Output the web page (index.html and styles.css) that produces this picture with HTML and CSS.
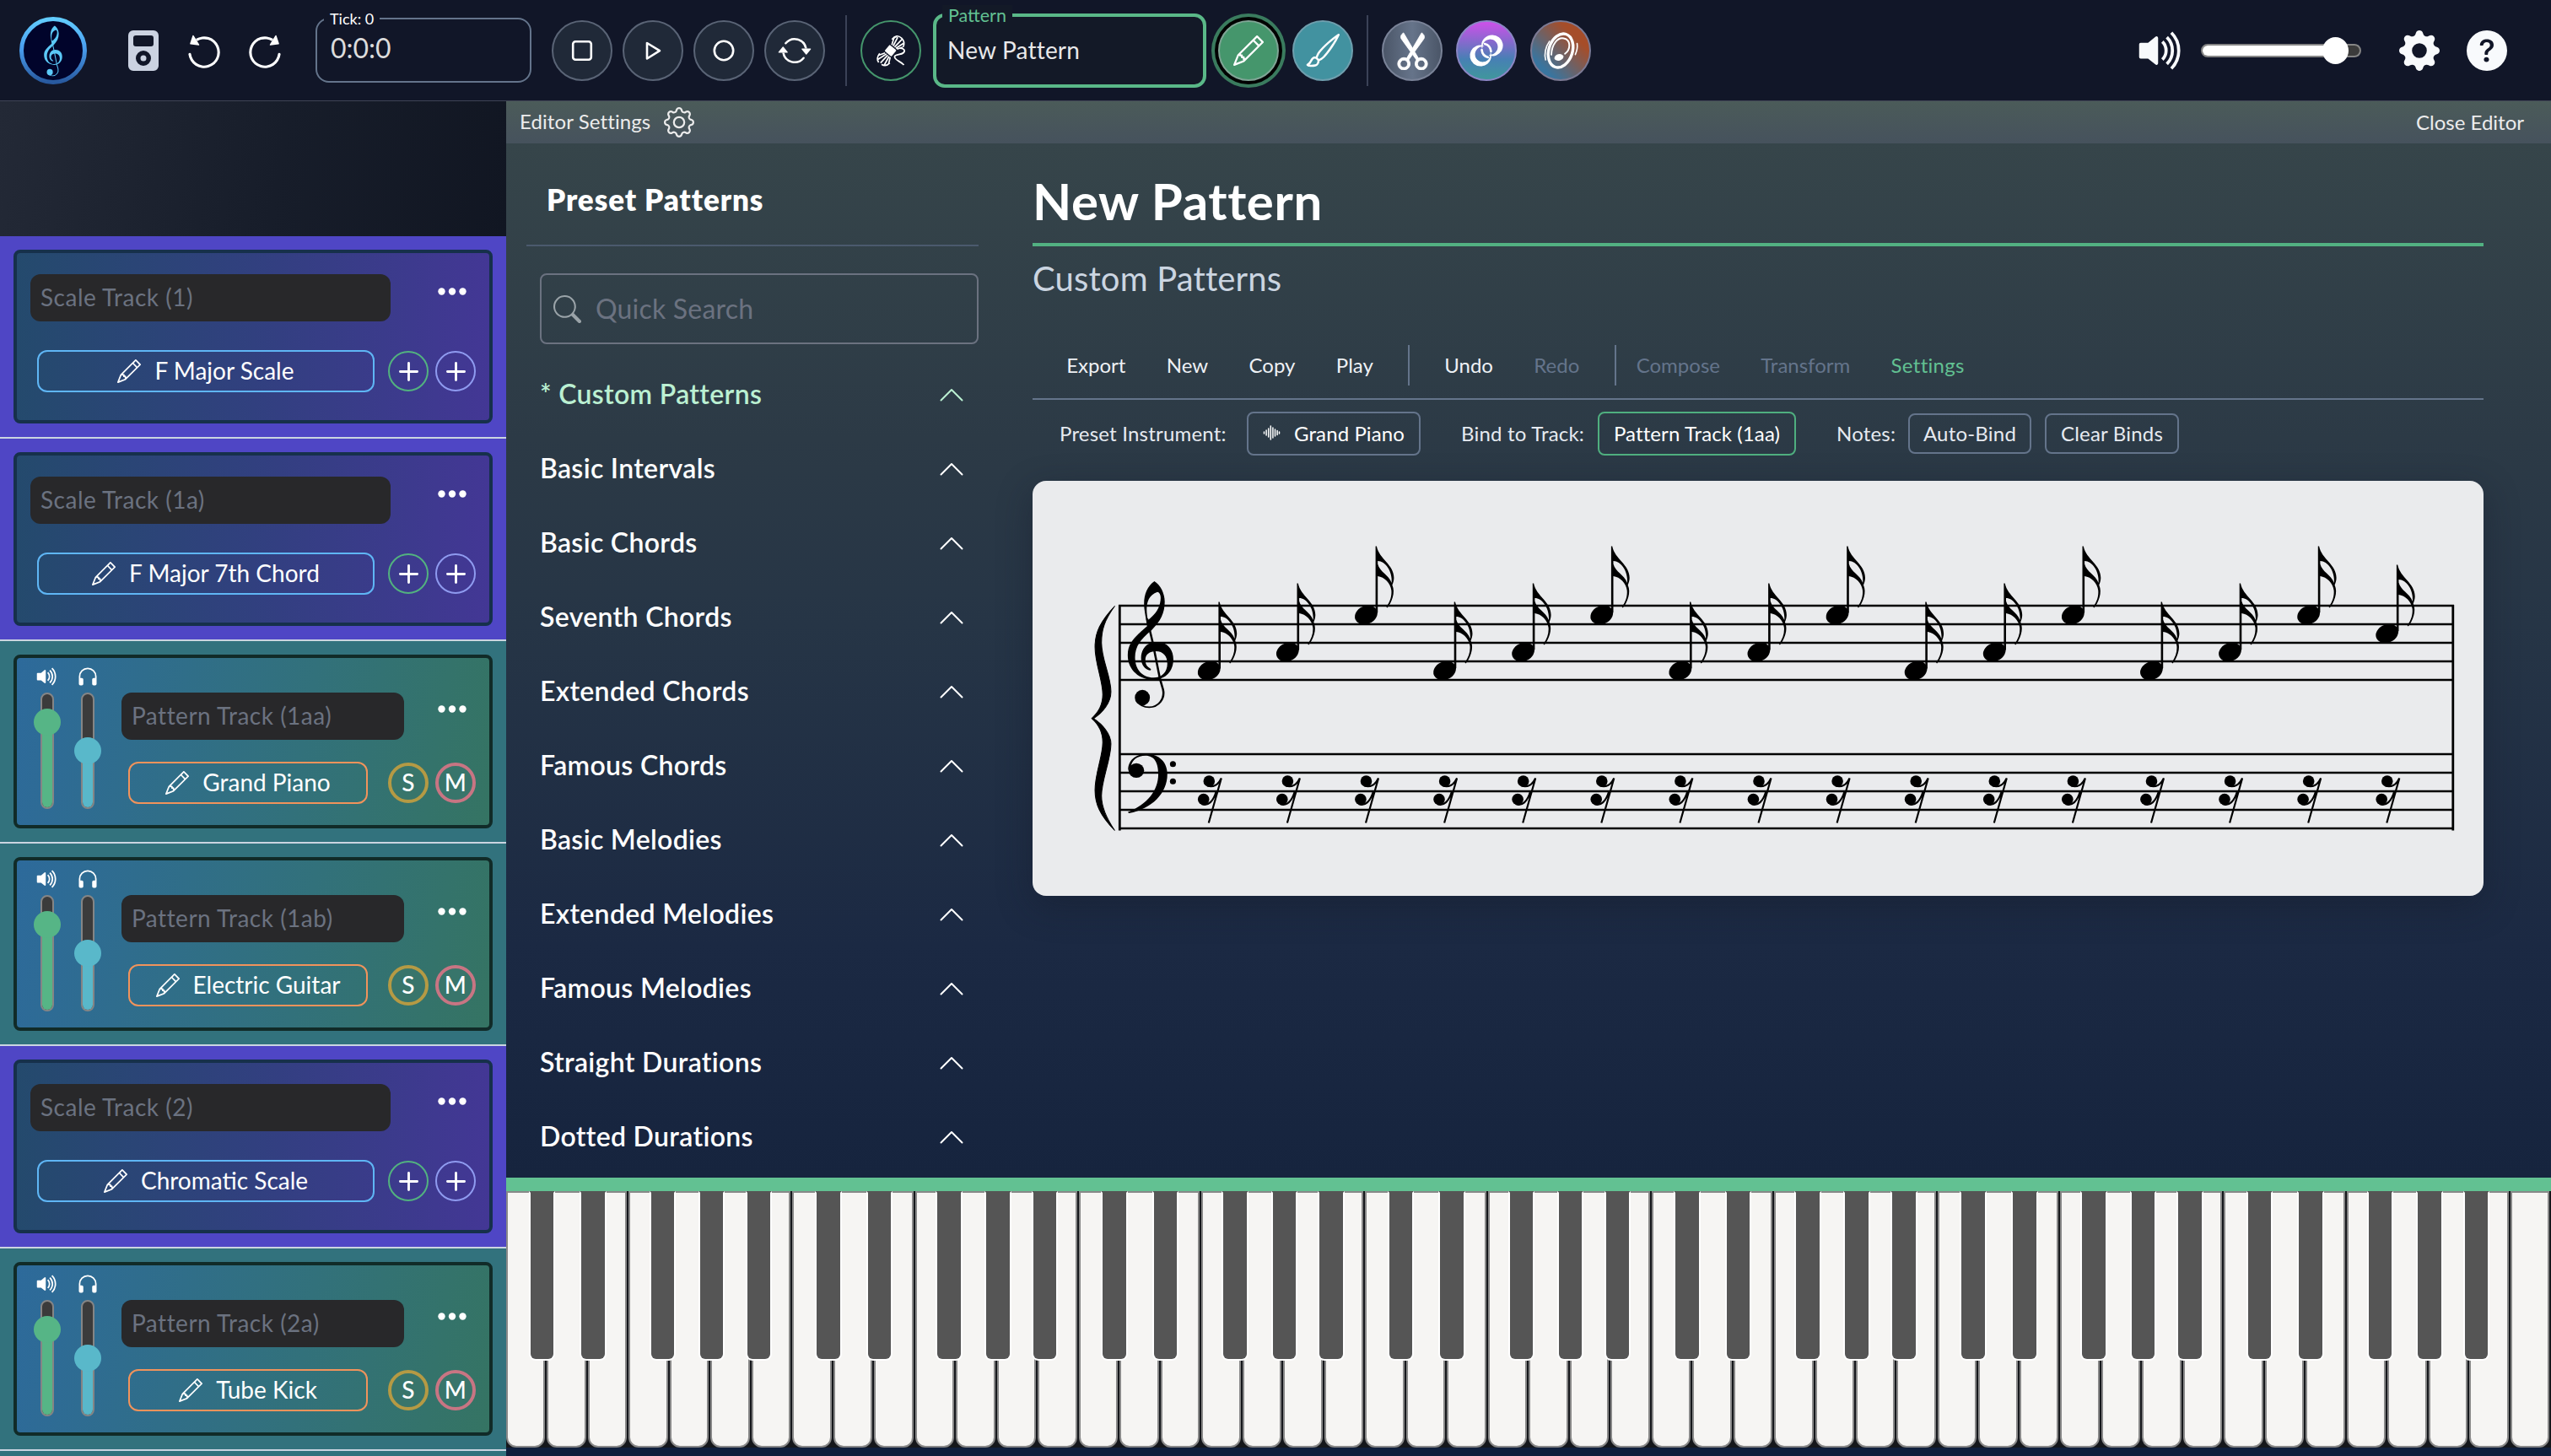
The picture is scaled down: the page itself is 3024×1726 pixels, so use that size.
FILE: index.html
```html
<!DOCTYPE html>
<html lang="en">
<head>
<meta charset="utf-8">
<title>New Pattern</title>
<link rel="stylesheet" href="styles.css">
</head>
<body>
<svg class="defs" aria-hidden="true">
  <defs>
    <linearGradient id="logoRing" x1="0" y1="0" x2="0" y2="1"><stop offset="0" stop-color="#62ccff"/><stop offset=".45" stop-color="#4a9ff0"/><stop offset="1" stop-color="#28599f"/></linearGradient>
    <symbol id="pencil" viewBox="0 0 16 16"><path d="M12.146.146a.5.5 0 0 1 .708 0l3 3a.5.5 0 0 1 0 .708l-10 10a.5.5 0 0 1-.168.11l-5 2a.5.5 0 0 1-.65-.65l2-5a.5.5 0 0 1 .11-.168zM11.207 2.5 13.5 4.793 14.793 3.5 12.5 1.207zm1.586 3L10.5 3.207 4 9.707V10h.5a.5.5 0 0 1 .5.5v.5h.5a.5.5 0 0 1 .5.5v.5h.293zm-9.761 5.175-.106.106-1.528 3.821 3.821-1.528.106-.106A.5.5 0 0 1 5 12.5V12h-.5a.5.5 0 0 1-.5-.5V11h-.5a.5.5 0 0 1-.468-.325"/></symbol>
    <symbol id="brush" viewBox="0 0 16 16"><path d="M15.825.12a.5.5 0 0 1 .132.584c-1.53 3.43-4.743 8.17-7.095 10.64a6.1 6.1 0 0 1-2.373 1.534c-.018.227-.06.538-.16.868-.201.659-.667 1.479-1.708 1.74a8.1 8.1 0 0 1-3.078.132 4 4 0 0 1-.562-.135 1.4 1.4 0 0 1-.466-.247.7.7 0 0 1-.204-.288.62.62 0 0 1 .004-.443c.095-.245.316-.38.461-.452.394-.197.625-.453.867-.826.095-.144.184-.297.287-.472l.117-.198c.151-.255.326-.54.546-.848.528-.739 1.201-.925 1.746-.896q.19.012.348.048c.062-.172.142-.38.238-.608.261-.619.658-1.419 1.187-2.069 2.176-2.67 6.18-6.206 9.117-8.104a.5.5 0 0 1 .596.04M4.705 11.912a1.2 1.2 0 0 0-.419-.1c-.246-.013-.573.05-.879.479-.197.275-.355.532-.5.777l-.105.177c-.106.181-.213.362-.32.528a3.4 3.4 0 0 1-.76.861c.69.112 1.736.111 2.657-.12.559-.139.843-.569.993-1.06a3 3 0 0 0 .126-.75zm1.44.026c.12-.04.277-.1.458-.183a5.1 5.1 0 0 0 1.535-1.1c1.9-1.996 4.412-5.57 6.052-8.631-2.59 1.927-5.566 4.66-7.302 6.792-.442.543-.795 1.243-1.042 1.826-.121.288-.214.54-.275.72v.001l.575.575z"/></symbol>
    <symbol id="scissors" viewBox="0 0 16 16"><path stroke="currentColor" stroke-width=".3" d="M3.5 3.5c-.614-.884-.074-1.962.858-2.5L8 7.226 11.642 1c.932.538 1.472 1.616.858 2.5L8.81 8.61l1.556 2.661a2.5 2.5 0 1 1-.794.637L8 9.73l-1.572 2.177a2.5 2.5 0 1 1-.794-.637L7.19 8.61zm2.5 10a1.5 1.5 0 1 0-3 0 1.5 1.5 0 0 0 3 0m7 0a1.5 1.5 0 1 0-3 0 1.5 1.5 0 0 0 3 0"/></symbol>
    <symbol id="gear" viewBox="0 0 16 16"><path d="M8 4.754a3.246 3.246 0 1 0 0 6.492 3.246 3.246 0 0 0 0-6.492M5.754 8a2.246 2.246 0 1 1 4.492 0 2.246 2.246 0 0 1-4.492 0"/><path d="M9.796 1.343c-.527-1.79-3.065-1.79-3.592 0l-.094.319a.873.873 0 0 1-1.255.52l-.292-.16c-1.64-.892-3.433.902-2.54 2.541l.159.292a.873.873 0 0 1-.52 1.255l-.319.094c-1.79.527-1.79 3.065 0 3.592l.319.094a.873.873 0 0 1 .52 1.255l-.16.292c-.892 1.64.901 3.434 2.541 2.54l.292-.159a.873.873 0 0 1 1.255.52l.094.319c.527 1.79 3.065 1.79 3.592 0l.094-.319a.873.873 0 0 1 1.255-.52l.292.16c1.64.893 3.434-.902 2.54-2.541l-.159-.292a.873.873 0 0 1 .52-1.255l.319-.094c1.79-.527 1.79-3.065 0-3.592l-.319-.094a.873.873 0 0 1-.52-1.255l.16-.292c.893-1.64-.902-3.433-2.541-2.54l-.292.159a.873.873 0 0 1-1.255-.52zm-2.633.283c.246-.835 1.428-.835 1.674 0l.094.319a1.873 1.873 0 0 0 2.693 1.115l.291-.16c.764-.415 1.6.42 1.184 1.185l-.159.292a1.873 1.873 0 0 0 1.116 2.692l.318.094c.835.246.835 1.428 0 1.674l-.319.094a1.873 1.873 0 0 0-1.115 2.693l.16.291c.415.764-.42 1.6-1.185 1.184l-.291-.159a1.873 1.873 0 0 0-2.693 1.116l-.094.318c-.246.835-1.428.835-1.674 0l-.094-.319a1.873 1.873 0 0 0-2.692-1.115l-.292.16c-.764.415-1.6-.42-1.184-1.185l.159-.291A1.873 1.873 0 0 0 1.945 8.93l-.319-.094c-.835-.246-.835-1.428 0-1.674l.319-.094A1.873 1.873 0 0 0 3.06 4.377l-.16-.292c-.415-.764.42-1.6 1.185-1.184l.292.159a1.873 1.873 0 0 0 2.692-1.115z"/></symbol>
    <symbol id="gear-fill" viewBox="0 0 16 16"><path d="M9.405 1.05c-.413-1.4-2.397-1.4-2.81 0l-.1.34a1.464 1.464 0 0 1-2.105.872l-.31-.17c-1.283-.698-2.686.705-1.987 1.987l.169.311c.446.82.023 1.841-.872 2.105l-.34.1c-1.4.413-1.4 2.397 0 2.81l.34.1a1.464 1.464 0 0 1 .872 2.105l-.17.31c-.698 1.283.705 2.686 1.987 1.987l.311-.169a1.464 1.464 0 0 1 2.105.872l.1.34c.413 1.4 2.397 1.4 2.81 0l.1-.34a1.464 1.464 0 0 1 2.105-.872l.31.17c1.283.698 2.686-.705 1.987-1.987l-.169-.311a1.464 1.464 0 0 1 .872-2.105l.34-.1c1.4-.413 1.4-2.397 0-2.81l-.34-.1a1.464 1.464 0 0 1-.872-2.105l.17-.31c.698-1.283-.705-2.686-1.987-1.987l-.311.169a1.464 1.464 0 0 1-2.105-.872zM8 10.93a2.929 2.929 0 1 1 0-5.86 2.929 2.929 0 0 1 0 5.858z"/></symbol>
    <symbol id="question" viewBox="0 0 16 16"><path d="M16 8A8 8 0 1 1 0 8a8 8 0 0 1 16 0M5.496 6.033h.825c.138 0 .248-.113.266-.25.09-.656.54-1.134 1.342-1.134.686 0 1.314.343 1.314 1.168 0 .635-.374.927-.965 1.371-.673.489-1.206 1.06-1.168 1.987l.003.217a.25.25 0 0 0 .25.246h.811a.25.25 0 0 0 .25-.25v-.105c0-.718.273-.927 1.01-1.486.609-.463 1.244-.977 1.244-2.056 0-1.511-1.276-2.241-2.673-2.241-1.267 0-2.655.59-2.75 2.286a.237.237 0 0 0 .241.247m2.325 6.443c.61 0 1.029-.394 1.029-.927 0-.552-.42-.94-1.029-.94-.584 0-1.009.388-1.009.94 0 .533.425.927 1.01.927z"/></symbol>
    <symbol id="volume" viewBox="0 0 16 16"><path d="M11.536 14.01A8.47 8.47 0 0 0 14.026 8a8.47 8.47 0 0 0-2.49-6.01l-.708.707A7.48 7.48 0 0 1 13.025 8c0 2.071-.84 3.946-2.197 5.303z"/><path d="M10.121 12.596A6.48 6.48 0 0 0 12.025 8a6.48 6.48 0 0 0-1.904-4.596l-.707.707A5.48 5.48 0 0 1 11.025 8a5.48 5.48 0 0 1-1.61 3.89z"/><path d="M8.707 11.182A4.5 4.5 0 0 0 10.025 8a4.5 4.5 0 0 0-1.318-3.182L8 5.525A3.5 3.5 0 0 1 9.025 8 3.5 3.5 0 0 1 8 10.475zM6.717 3.55A.5.5 0 0 1 7 4v8a.5.5 0 0 1-.812.39L3.825 10.5H1.5A.5.5 0 0 1 1 10V6a.5.5 0 0 1 .5-.5h2.325l2.363-1.89a.5.5 0 0 1 .529-.06"/></symbol>
    <symbol id="headphones" viewBox="0 0 16 16"><path d="M8 3a5 5 0 0 0-5 5v1h1a1 1 0 0 1 1 1v3a1 1 0 0 1-1 1H3a1 1 0 0 1-1-1V8a6 6 0 1 1 12 0v5a1 1 0 0 1-1 1h-1a1 1 0 0 1-1-1v-3a1 1 0 0 1 1-1h1V8a5 5 0 0 0-5-5"/></symbol>
    <symbol id="rewind" viewBox="0 0 16 16"><g transform="rotate(-32 8 8)"><path d="M8 3a5 5 0 1 1-4.546 2.914.5.5 0 0 0-.908-.417A6 6 0 1 0 8 2z"/><path d="M8 4.466V.534a.25.25 0 0 0-.41-.192L5.23 2.308a.25.25 0 0 0 0 .384l2.36 1.966A.25.25 0 0 0 8 4.466"/></g></symbol>
    <symbol id="repeat" viewBox="0 0 16 16"><path d="M11.534 7h3.932a.25.25 0 0 1 .192.41l-1.966 2.36a.25.25 0 0 1-.384 0l-1.966-2.36a.25.25 0 0 1 .192-.41m-11 2h3.932a.25.25 0 0 0 .192-.41L2.692 6.23a.25.25 0 0 0-.384 0L.342 8.59A.25.25 0 0 0 .534 9"/><path d="M8 3c-1.552 0-2.94.707-3.857 1.818a.5.5 0 1 1-.771-.636A6.002 6.002 0 0 1 13.917 7H12.9A5 5 0 0 0 8 3M3.1 9a5.002 5.002 0 0 0 8.757 2.182.5.5 0 1 1 .771.636A6.002 6.002 0 0 1 2.083 9z"/></symbol>
    <symbol id="search" viewBox="0 0 16 16"><path d="M11.742 10.344a6.5 6.5 0 1 0-1.397 1.398h-.001q.044.06.098.115l3.85 3.85a1 1 0 0 0 1.415-1.414l-3.85-3.85a1 1 0 0 0-.115-.1zM12 6.5a5.5 5.5 0 1 1-11 0 5.5 5.5 0 0 1 11 0"/></symbol>
    <symbol id="chevron" viewBox="0 0 28 16"><path d="M1.5 14.5 14 2 26.500 14.500" fill="none" stroke="currentColor" stroke-width="2" stroke-linecap="round" stroke-linejoin="round"/></symbol>
    <symbol id="dots" viewBox="0 0 34 9"><circle cx="4.500" cy="4.500" r="4.200"/><circle cx="17" cy="4.500" r="4.200"/><circle cx="29.500" cy="4.500" r="4.200"/></symbol>
    <symbol id="plus" viewBox="0 0 24 24"><path d="M12 1.500v21M1.500 12h21" stroke="currentColor" stroke-width="3" stroke-linecap="round"/></symbol>
    <symbol id="gclef" viewBox="1335 688 58 153"><g transform="translate(1220 560) scale(.5102 .33333)">
      <path fill-rule="evenodd" d="M291 387C270 410 263 450 269 500L274 547C242 590 229 610 229 650C229 705 258 737 288 737C318 737 335 705 335 665C335 625 318 603 296 603C272 603 260 630 260 660C260 685 270 702 281 704C284 703 284 700 280 696C272 688 270 680 270 665C270 648 280 636 294 636C312 636 321 655 321 680C321 710 308 730 289 730C262 730 246 700 246 658C246 615 262 590 285 560C305 530 315 500 315 460C315 430 305 400 291 387ZM298 425C306 428 307 445 304 465C300 492 290 508 276 525C271 490 269 440 298 425Z"/>
      <path d="M274 520L287 605L304 735L311 772C316 806 300 835 279 835C268 835 258 830 254 815" fill="none" stroke="currentColor" stroke-width="5"/><ellipse cx="263" cy="801" rx="17.500" ry="28"/></g></symbol>
  </defs>
</svg>

<header class="topbar">
  <svg class="logo" viewBox="0 0 80 80"><circle cx="40" cy="40" r="37.500" fill="#01042b" stroke="url(#logoRing)" stroke-width="5"/><use href="#gclef" x="28" y="10" width="24" height="61"/></svg>
  <svg class="player" viewBox="0 0 36 48"><path fill-rule="evenodd" d="M6 0h24a6 6 0 0 1 6 6v36a6 6 0 0 1-6 6H6a6 6 0 0 1-6-6V6a6 6 0 0 1 6-6M9 6a3 3 0 0 0-3 3v7a3 3 0 0 0 3 3h18a3 3 0 0 0 3-3V9a3 3 0 0 0-3-3zM18 24a9 9 0 1 0 0 18 9 9 0 0 0 0-18M18 29.500a3.500 3.500 0 1 1 0 7 3.500 3.500 0 0 1 0-7"/></svg>
  <svg class="undo"><use href="#rewind"/></svg>
  <svg class="redo"><use href="#rewind"/></svg>
  <fieldset class="tick"><legend>Tick: 0</legend>0:0:0</fieldset>
  <div class="transport">
    <button class="round"><svg viewBox="0 0 40 40" class="i40"><rect x="9.200" y="9.200" width="21.600" height="21.600" rx="3" fill="none" stroke="currentColor" stroke-width="2.600"/></svg></button>
    <button class="round"><svg viewBox="0 0 40 40" class="i40"><path d="M13 11v18.500l15-9.300z" fill="none" stroke="currentColor" stroke-width="2.600" stroke-linejoin="round"/></svg></button>
    <button class="round"><svg viewBox="0 0 40 40" class="i40"><circle cx="20" cy="20" r="11.200" fill="none" stroke="currentColor" stroke-width="2.600"/></svg></button>
    <button class="round"><svg class="i40"><use href="#repeat"/></svg></button>
  </div>
  <i class="rule"></i>
  <button class="round yarn"><svg viewBox="0 0 72 72" class="full line">
    <g transform="rotate(-50 36 36)"><rect x="31" y="30.500" width="9.500" height="10.500" rx="1" fill="currentColor" stroke="none"/>
    <path stroke-width="1.700" d="M42 32.500L49 29.500Q52 29 53 31M42 34.600L53.500 32M42 36.700L54.500 37.500M42 38.800L52.500 42M42 40.500L48 44M47 28.500Q56 28 55.500 36.500Q55 43 48.500 44.500M29.500 32.500L22.500 28.500M29.500 34.600L18.500 31M29.500 36.700L17 36M29.500 38.800L18 41M29.500 40.500L22.500 44M25 28Q17 28.500 16 34M16.500 38Q17 44 24 44.500"/></g>
    <path stroke-width="1.800" d="M46.500 33c5 0 7 3 4.500 5.500-3 3-11 1.500-10.500 5 .4 4 7 5 11 9.500"/></svg></button>
  <fieldset class="pattern-name"><legend>Pattern</legend>New Pattern</fieldset>
  <button class="round pen"><svg class="i36"><use href="#pencil"/></svg></button>
  <button class="round paint"><svg class="i40"><use href="#brush"/></svg></button>
  <i class="rule second"></i>
  <button class="round cut"><svg class="i46"><use href="#scissors"/></svg></button>
  <button class="round rings"><svg viewBox="0 0 72 72" class="full"><g fill-rule="evenodd"><path d="M43 17.500a12.500 12.500 0 0 1 5 24c-3 1.500-7 1.200-9.500-.5 4 .2 7.500-1 9.500-4.500a9 9 0 1 0-16.500-5.500c0 1-.1 2-.6 3-3-8 3-16.500 12.100-16.500"/><path d="M29 54.500a12.500 12.500 0 0 1-5-24c3-1.500 7-1.200 9.500.5-4-.2-7.500 1-9.500 4.500a9 9 0 1 0 16.500 5.500c0-1 .1-2 .6-3 3 8-3 16.500-12.100 16.500"/></g><path d="M34 28c4 1 7 4 7.500 9M38 44c-4-1-7-4-7.500-9" fill="none" stroke="currentColor" stroke-width="2.600" stroke-linecap="round"/></svg></button>
  <button class="round ear"><svg viewBox="0 0 72 72" class="full line" stroke-linecap="round"><g transform="rotate(18 36 36)"><ellipse cx="36" cy="36" rx="14" ry="20.500" stroke-width="3.400"/><path d="M20 29.500C17.500 37 18.500 46 22.500 52M52 22C54 26 54.500 30 54 35" stroke-width="1.600"/><path d="M27 44C24 33 27 22 35 21C44 20 47 31 42 38" stroke-width="2"/></g><ellipse cx="34" cy="44" rx="5.500" ry="3.800" fill="currentColor" stroke="none" transform="rotate(-15 34 44)"/></svg></button>
  <div class="right">
    <svg class="vol"><use href="#volume"/></svg>
    <div class="hslider"><i class="fill"></i><i class="thumb"></i></div>
    <svg class="i48"><use href="#gear-fill"/></svg>
    <svg class="i48 help"><use href="#question"/></svg>
  </div>
</header>

<div class="workspace">
  <aside class="tracks">
    <div class="corner"></div>

    <section class="track scale"><div class="card">
      <div class="row top"><div class="name">Scale Track (1)</div><svg class="more"><use href="#dots"/></svg></div>
      <div class="row"><button class="edit"><svg><use href="#pencil"/></svg>F Major Scale</button><button class="mini g"><svg><use href="#plus"/></svg></button><button class="mini p"><svg><use href="#plus"/></svg></button></div>
    </div></section>

    <section class="track scale"><div class="card">
      <div class="row top"><div class="name">Scale Track (1a)</div><svg class="more"><use href="#dots"/></svg></div>
      <div class="row"><button class="edit"><svg><use href="#pencil"/></svg>F Major 7th Chord</button><button class="mini g"><svg><use href="#plus"/></svg></button><button class="mini p"><svg><use href="#plus"/></svg></button></div>
    </div></section>

    <section class="track patt"><div class="card">
      <div class="fader"><svg><use href="#volume"/></svg><div class="vslider vol-f"><i class="fill"></i><i class="thumb"></i></div></div>
      <div class="fader"><svg><use href="#headphones"/></svg><div class="vslider pan-f"><i class="fill"></i><i class="thumb"></i></div></div>
      <div class="body">
        <div class="row top"><div class="name">Pattern Track (1aa)</div><svg class="more"><use href="#dots"/></svg></div>
        <div class="row"><button class="edit"><svg><use href="#pencil"/></svg>Grand Piano</button><button class="mini s">S</button><button class="mini m">M</button></div>
      </div>
    </div></section>

    <section class="track patt"><div class="card">
      <div class="fader"><svg><use href="#volume"/></svg><div class="vslider vol-f"><i class="fill"></i><i class="thumb"></i></div></div>
      <div class="fader"><svg><use href="#headphones"/></svg><div class="vslider pan-f"><i class="fill"></i><i class="thumb"></i></div></div>
      <div class="body">
        <div class="row top"><div class="name">Pattern Track (1ab)</div><svg class="more"><use href="#dots"/></svg></div>
        <div class="row"><button class="edit"><svg><use href="#pencil"/></svg>Electric Guitar</button><button class="mini s">S</button><button class="mini m">M</button></div>
      </div>
    </div></section>

    <section class="track scale"><div class="card">
      <div class="row top"><div class="name">Scale Track (2)</div><svg class="more"><use href="#dots"/></svg></div>
      <div class="row"><button class="edit"><svg><use href="#pencil"/></svg>Chromatic Scale</button><button class="mini g"><svg><use href="#plus"/></svg></button><button class="mini p"><svg><use href="#plus"/></svg></button></div>
    </div></section>

    <section class="track patt"><div class="card">
      <div class="fader"><svg><use href="#volume"/></svg><div class="vslider vol-f"><i class="fill"></i><i class="thumb"></i></div></div>
      <div class="fader"><svg><use href="#headphones"/></svg><div class="vslider pan-f"><i class="fill"></i><i class="thumb"></i></div></div>
      <div class="body">
        <div class="row top"><div class="name">Pattern Track (2a)</div><svg class="more"><use href="#dots"/></svg></div>
        <div class="row"><button class="edit"><svg><use href="#pencil"/></svg>Tube Kick</button><button class="mini s">S</button><button class="mini m">M</button></div>
      </div>
    </div></section>
    <section class="track patt"></section>
  </aside>

  <main class="stage">
    <div class="editor">
      <div class="editor-bar"><span>Editor Settings</span><svg><use href="#gear"/></svg><span class="close">Close Editor</span></div>
      <div class="editor-body">
        <nav class="presets">
          <h2>Preset Patterns</h2>
          <div class="list">
            <div class="search"><svg><use href="#search"/></svg><span>Quick Search</span></div>
            <div class="item on">* Custom Patterns<svg><use href="#chevron"/></svg></div>
            <div class="item">Basic Intervals<svg><use href="#chevron"/></svg></div>
            <div class="item">Basic Chords<svg><use href="#chevron"/></svg></div>
            <div class="item">Seventh Chords<svg><use href="#chevron"/></svg></div>
            <div class="item">Extended Chords<svg><use href="#chevron"/></svg></div>
            <div class="item">Famous Chords<svg><use href="#chevron"/></svg></div>
            <div class="item">Basic Melodies<svg><use href="#chevron"/></svg></div>
            <div class="item">Extended Melodies<svg><use href="#chevron"/></svg></div>
            <div class="item">Famous Melodies<svg><use href="#chevron"/></svg></div>
            <div class="item">Straight Durations<svg><use href="#chevron"/></svg></div>
            <div class="item">Dotted Durations<svg><use href="#chevron"/></svg></div>
          </div>
        </nav>
        <section class="content">
          <h1>New Pattern</h1>
          <p class="sub">Custom Patterns</p>
          <div class="menu"><span>Export</span><span>New</span><span>Copy</span><span>Play</span><i></i><span>Undo</span><span class="off">Redo</span><i class="tight"></i><span class="off">Compose</span><span class="off">Transform</span><span class="active">Settings</span></div>
          <div class="settings">
            <label class="l1">Preset Instrument:</label><button class="b1"><svg viewBox="0 0 20 20"><path d="M1 9v2M3.600 7v6M6.200 5v10M8.800 2v16M11.400 4v12M14 6v8M16.600 7.500v5M19 9v2" stroke="currentColor" stroke-width="1.500" stroke-linecap="round"/></svg>Grand Piano</button>
            <label class="l2">Bind to Track:</label><button class="b2">Pattern Track (1aa)</button>
            <label class="l3">Notes:</label><button class="b3">Auto-Bind</button><button class="b4">Clear Binds</button>
          </div>
          <div class="paper">
            <svg id="score" viewBox="1224 570 1720 492">
              <defs>
                <g id="note"><ellipse cx="-12.500" cy="0" rx="13.800" ry="10.700" transform="rotate(-24 -12.500 0)"/><path d="M-1.300 0V-81.500H0C3 -66 20.500 -60 20.500 -44C20.500 -41 19.500 -38 18.500 -35.500C20.500 -31 20.500 -26 19 -21C17.500 -16 15 -11 12.500 -8.500L11.500 -9.500C16 -16 18 -22 17.500 -29C16.500 -38 9 -45 1.300 -46V-3ZM1.300 -60.500C3.500 -51 14 -48 17.800 -38C19 -52 10 -64 1.300 -64Z"/></g>
                <g id="rest"><circle cx="0" cy="-12" r="6.800"/><circle cx="-6.600" cy="9.500" r="6.800"/><path d="M-2 -6.500C5 -4 11 -8 14.500 -15.500L-.500 37.500M-9 15C-1 18 5 12 8.500 0" fill="none" stroke="#000" stroke-width="2.200"/></g>
              </defs>
              <path d="M1326 718H2909M1326 740H2909M1326 762H2909M1326 784H2909M1326 806H2909M1326 894H2909M1326 916H2909M1326 938H2909M1326 960H2909M1326 982H2909" stroke="#000" stroke-width="2.400"/>
              <path d="M1327.300 717V984.500M2907.800 717V984.500" stroke="#000" stroke-width="2.800"/>
              <use href="#gclef" x="1335" y="688" width="58" height="153"/>
              <g transform="translate(1220 560) scale(.5102 .33333)">
                <path d="M199 475C165 530 153 570 153 620C153 680 171 740 171 790C171 830 160 855 145 875C160 895 171 920 171 960C171 1010 153 1070 153 1130C153 1180 165 1220 199 1274C175 1220 168 1185 168 1150C168 1095 190 1020 190 965C190 930 170 895 150 875C170 855 190 820 190 780C190 725 168 665 168 605C168 560 175 525 199 475" stroke="#000" stroke-width="2"/>
                <ellipse cx="249" cy="1060" rx="18" ry="26"/><ellipse cx="334" cy="1037" rx="7" ry="10.500"/><ellipse cx="334" cy="1099" rx="7" ry="10.500"/>
                <path d="M230 1060C229 1025 247 1001 272 1001C302 1001 321 1030 321 1073C321 1140 285 1197 232 1212L229 1208C275 1180 300 1130 300 1073C300 1035 292 1007 270 1007C252 1007 240 1022 237 1042Z"/>
              </g>
            </svg>
          </div>
        </section>
      </div>
    </div>
    <div class="piano" id="piano"></div>
  </main>
</div>
<script src="score.js"></script>
</body>
</html>
```

FILE: styles.css
```css
* { box-sizing: border-box; }
body { margin: 0; width: 3024px; height: 1726px; overflow: hidden; background: #0f1f3c; color: #fff; font-family: Lato, "Open Sans", sans-serif; font-size: 28px; letter-spacing: .2px; display: flex; flex-direction: column; }
svg { display: block; fill: currentColor; flex: none; }
button { font: inherit; color: inherit; letter-spacing: inherit; background: none; padding: 0; margin: 0; display: flex; align-items: center; justify-content: center; flex: none; white-space: nowrap; }
h1, h2, p { margin: 0; }
i { display: block; flex: none; }
.defs { position: absolute; width: 0; height: 0; }

.topbar { height: 120px; flex: none; background: #111628; border-bottom: 1px solid #3f4455; display: flex; align-items: center; padding-left: 23px; }
.logo { width: 80px; height: 80px; color: #5bc8f7; }
.player { width: 36px; height: 48px; margin-left: 49px; color: #cbd2e1; }
.undo, .redo { width: 50px; height: 50px; margin: 4px 0 0 29px; }
.redo { transform: scaleX(-1); margin-left: 22px; }
fieldset { margin: 0; min-width: 0; flex: none; white-space: nowrap; }
legend { letter-spacing: 0; }
.tick { width: 256px; height: 84px; margin-top: -8px; margin-left: 35px; border: 2px solid #64748b; border-radius: 16px; padding: 10px 16px 0; font-size: 32px; color: #dcdcdc; line-height: 34px; letter-spacing: 0; }
.tick legend { font-size: 18px; line-height: 16px; padding: 0 7px; margin-left: -8px; color: #fff; }
.transport { display: flex; gap: 12px; margin-left: 24px; }
.round { width: 72px; height: 72px; border-radius: 50%; border: 2px solid #5a6476; background: #202938; color: #fff; }
.i36 { width: 36px; height: 36px; } .i40 { width: 40px; height: 40px; } .i46 { width: 47px; height: 47px; } .i48 { width: 48px; height: 48px; }
.full { width: 72px; height: 72px; margin: -2px; }
.line { fill: none; stroke: currentColor; }
.rule { width: 2px; height: 84px; background: #3b4257; margin-left: 24px; }
.yarn { margin-left: 16px; background: transparent; border-color: #45966c; }
.pattern-name { width: 324px; height: 98px; margin: -10px 0 0 14px; border: 4px solid #5ab888; border-radius: 14px; background: #131927; padding: 6px 13px 0; font-size: 28px; line-height: 46px; color: #e8e8ea; }
.pattern-name legend { font-size: 21.5px; line-height: 24px; padding: 0 7px; margin-left: -6px; color: #62c192; background: #131927; }
.pen { margin-left: 14px; background: #45966c; border-color: #7fa595; box-shadow: 0 0 0 4px #000, 0 0 0 8px #3a7b5e; }
.paint { margin-left: 16px; background: #4292a0; border-color: #6f9fae; }
.second { margin-left: 16px; }
.cut { margin-left: 16px; background: linear-gradient(90deg, #4b5668, #66748a 50%, #4b5668); border-color: #7a8398; }
.rings { margin-left: 16px; background: linear-gradient(#ce50ea, #4780b4 65%, #40979c); border-color: #8a86c4; }
.ear { margin-left: 16px; background: linear-gradient(225deg, #a64d29 25%, #39759f 80%); border-color: #7c7a94; }
.right { display: flex; align-items: center; margin-left: auto; padding-right: 52px; color: #f8fafc; }
.vol { width: 60px; height: 60px; }
.hslider { width: 190px; height: 16px; margin-left: 17px; border: 2px solid #858585; border-radius: 8px; background: #3b3b3b; position: relative; }
.hslider .fill { width: 150px; height: 12px; border-radius: 6px; background: #fff; }
.hslider .thumb { position: absolute; left: 142px; top: -10px; width: 31px; height: 32px; border-radius: 50%; background: #fff; }
.hslider + svg { margin-left: 45px; }
.help { margin-left: 32px; }

.workspace { display: flex; flex: 1; min-height: 0; }
.tracks { width: 600px; flex: none; overflow: hidden; }
.corner { height: 160px; background: linear-gradient(100deg, #232936, #171d2a 55%, #111622); }
.track { height: 240px; padding: 16px; border-bottom: 2px solid #cbd5e1; }
.scale { background: #4f46c5; }
.patt { background: #32727d; }
.card { height: 206px; width: 568px; border: 4px solid #16304b; border-radius: 8px; }
.scale .card { background: linear-gradient(90deg, #244a6d, #31407f 50%, #433795); padding: 25px 0 0 16px; }
.patt .card { border-color: #112b28; background: linear-gradient(100deg, #2d6a9b, #32717b 60%, #357463); display: flex; padding-left: 20px; }
.row { display: flex; align-items: center; }
.top { align-items: flex-start; }
.name { width: 427px; height: 56px; line-height: 54px; padding-left: 12px; border-radius: 12px; background: #28282a; color: #6b7280; letter-spacing: .5px; white-space: nowrap; }
.more { width: 34px; height: 9px; margin: 16px 0 0 56px; }
.scale .row + .row { margin: 34px 0 0 8px; }
.edit { width: 400px; height: 50px; border: 2px solid #5fb6f5; border-radius: 12px; padding-bottom: 2px; letter-spacing: 0; }
.edit svg { width: 28px; height: 28px; margin: 2px 16px 0 0; }
.mini { width: 48px; height: 48px; border-radius: 50%; border: 2px solid; margin-left: 16px; }
.mini + .mini { margin-left: 8px; }
.mini svg { width: 23px; height: 23px; color: #fff; }
.g { border-color: #52b27f; } .p { border-color: #8f9bf0; }
.s, .m { border-width: 4px; background: #38756b; padding-bottom: 2px; font-weight: 500; }
.s { border-color: #b59a44; } .m { border-color: #c87583; }
.fader { width: 32px; padding-top: 8px; display: flex; flex-direction: column; align-items: center; }
.fader + .fader { margin-left: 16px; }
.fader svg { width: 28px; height: 28px; }
.vslider { width: 16px; height: 138px; margin-top: 5px; border: 2px solid #858585; border-radius: 8px; background: #3b3b3b; position: relative; display: flex; align-items: flex-end; }
.vslider .fill { width: 12px; border-radius: 6px; background: currentColor; }
.vslider .thumb { position: absolute; left: -10px; width: 32px; height: 32px; border-radius: 50%; background: currentColor; }
.vol-f { color: #56b586; } .vol-f .fill { height: 102px; } .vol-f .thumb { top: 17px; }
.pan-f { color: #59b8ca; } .pan-f .fill { height: 68px; } .pan-f .thumb { top: 51px; }
.body { margin-left: 24px; padding-top: 41px; }
.patt .name { width: 335px; padding-left: 12px; }
.patt .more { margin: 15px 0 0 40px; }
.patt .row + .row { margin: 26px 0 0 8px; }
.patt .edit { width: 284px; border-color: #f1935b; }
.patt .edit + .mini { margin-left: 24px; }

.stage { flex: 1; display: flex; flex-direction: column; }
.editor { height: 1276px; background: linear-gradient(#36454a 50px, #2c3a46 400px, #263546 620px, #1b2943 1000px, #16243e); }
.editor-bar { height: 50px; background: linear-gradient(#4b5b59, #46525d); display: flex; align-items: center; padding: 0 32px 0 16px; font-size: 24px; color: #ececec; letter-spacing: .1px; }
.editor-bar span { padding-bottom: 4px; }
.editor-bar svg { width: 36px; height: 36px; margin-left: 16px; }
.editor-bar .close { margin-left: auto; letter-spacing: 0; padding-bottom: 2px; }
.editor-body { display: flex; height: 1226px; overflow: hidden; }
.presets { width: 536px; margin-left: 24px; flex: none; }
h2 { font-size: 35px; font-weight: 800; letter-spacing: .9px; height: 122px; line-height: 132px; padding-left: 24px; border-bottom: 2px solid #4b5a6e; }
.list { padding: 32px 0 0 16px; }
.search { height: 84px; border: 2px solid #6b7280; border-radius: 8px; display: flex; align-items: center; font-size: 32px; color: #6b7280; padding-left: 14px; }
.search span { padding-bottom: 2px; }
.search svg { width: 33px; height: 33px; color: #9aa3a8; margin-right: 17px; }
.item { height: 88px; display: flex; align-items: center; justify-content: space-between; padding-right: 18px; font-size: 32px; font-weight: 600; letter-spacing: .32px; }
.search + .item { margin-top: 14px; }
.on { color: #bbf0d2; }
.item svg { width: 28px; height: 16px; margin-top: 3px; }
.content { width: 1720px; margin-left: 64px; }
h1 { font-size: 60px; font-weight: 700; letter-spacing: .6px; height: 122px; line-height: 137px; border-bottom: 4px solid #52b182; }
.sub { font-size: 40px; color: #cbd5e1; height: 117px; line-height: 77px; letter-spacing: .15px; }
.menu { height: 65px; padding: 0 0 15px 16px; border-bottom: 2px solid #64748b; display: flex; align-items: center; font-size: 24px; color: #eef1f5; letter-spacing: 0; }
.menu span { padding: 0 24.2px 2px; }
.menu i { width: 2px; height: 48px; background: #64748b; margin: 0 17px; }
.menu .tight { margin-right: 0; }
.menu .off { color: #64748b; } .menu .active { color: #62c192; letter-spacing: .3px; }
.settings { display: flex; align-items: center; height: 52px; margin-top: 14px; padding-left: 32px; font-size: 24px; color: #e6eaf0; white-space: nowrap; letter-spacing: .2px; }
.settings label { padding-bottom: 2px; }
.settings button { height: 52px; border: 2px solid #64748b; border-radius: 8px; padding-bottom: 2px; }
.l1 { width: 222px; } .b1 { width: 206px; margin-right: 48px; color: #fff; letter-spacing: .1px; } .b1 svg { width: 21px; height: 20px; margin-right: 16px; }
.l2 { width: 162px; } .settings .b2 { width: 235px; margin-right: 48px; border-color: #4faf7f; color: #fff; letter-spacing: .1px; }
.l3 { width: 85px; } .settings .b3 { width: 146px; height: 48px; margin-right: 16px; } .settings .b4 { width: 159px; height: 48px; }
.paper { height: 492px; margin-top: 30px; border-radius: 16px; background: #eaebed; color: #000; box-shadow: 0 12px 40px rgba(20, 25, 40, .4); }
#score { width: 1720px; height: 492px; }

.piano { height: 320px; border-top: 16px solid #62c192; background: #15171b; position: relative; display: flex; }
.white { flex: 1 1 0; background: #f6f5f3; border: 2px solid #888; border-radius: 0 0 12px 12px; margin-right: 2px; }
.black { position: absolute; top: 0; width: 1.3%; height: 66%; background: #555; border: 2px solid #fff; border-top-color: transparent; border-radius: 0 0 8px 8px; }
```

FILE: score.js
```js
// Sixteenth-note arpeggio: vertical centre of each note head, rests in the bass staff
const heads = [795, 773, 729, 795, 773, 729, 795, 773, 729, 795, 773, 729, 795, 773, 729, 751];
const score = document.getElementById('score');
const place = (id, x, y) => {
  const use = document.createElementNS('http://www.w3.org/2000/svg', 'use');
  use.setAttribute('href', '#' + id);
  use.setAttribute('x', x);
  use.setAttribute('y', y);
  score.append(use);
};
heads.forEach((y, i) => {
  place('note', 1445.7 + i * 93.1, y);
  place('rest', 1433.3 + i * 93.1, 938);
});

// Keyboard: 50 naturals from C, accidentals offset inside each octave
const piano = document.getElementById('piano');
for (let i = 0; i < 50; i++) {
  const key = document.createElement('div');
  key.className = 'white';
  piano.append(key);
}
for (let octave = 0; octave < 7; octave++) {
  for (const offset of [0.55, 1.8, 3.5, 4.7, 5.85]) {
    const key = document.createElement('div');
    key.className = 'black';
    key.style.left = (octave * 7 + offset) * 2 + '%';
    piano.append(key);
  }
}
```
